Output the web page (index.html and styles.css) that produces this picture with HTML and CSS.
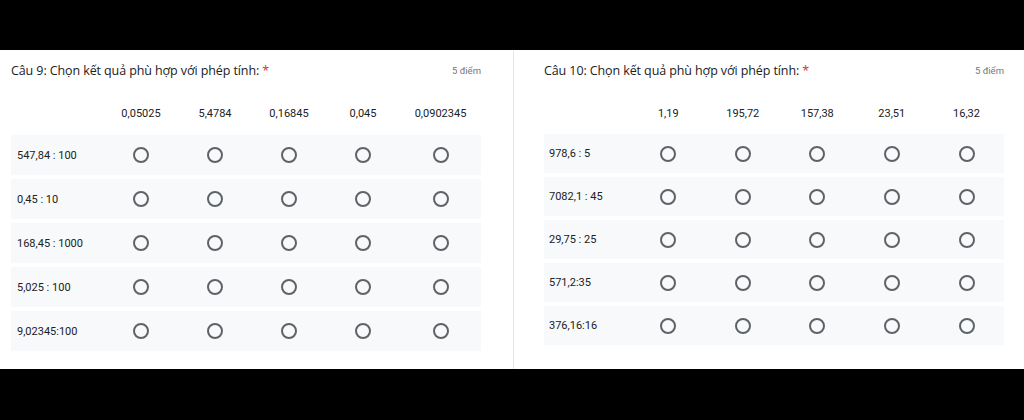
FILE: index.html
```html
<!DOCTYPE html>
<html lang="vi">
<head>
<meta charset="utf-8">
<link rel="stylesheet" href="styles.css">
</head>
<body>
<div class="bar"></div>
<main class="sheet">
  <section class="card card-left">
    <div class="head">
      <h2 class="title">Câu 9: Chọn kết quả phù hợp với phép tính: <span class="req">*</span></h2>
      <span class="points">5 điểm</span>
    </div>
    <div class="grid">
      <div class="cols"><span></span><span>0,05025</span><span>5,4784</span><span>0,16845</span><span>0,045</span><span>0,0902345</span></div>
      <div class="row"><span class="lbl">547,84 : 100</span><i class="radio"></i><i class="radio"></i><i class="radio"></i><i class="radio"></i><i class="radio"></i></div>
      <div class="row"><span class="lbl">0,45 : 10</span><i class="radio"></i><i class="radio"></i><i class="radio"></i><i class="radio"></i><i class="radio"></i></div>
      <div class="row"><span class="lbl">168,45 : 1000</span><i class="radio"></i><i class="radio"></i><i class="radio"></i><i class="radio"></i><i class="radio"></i></div>
      <div class="row"><span class="lbl">5,025 : 100</span><i class="radio"></i><i class="radio"></i><i class="radio"></i><i class="radio"></i><i class="radio"></i></div>
      <div class="row"><span class="lbl">9,02345:100</span><i class="radio"></i><i class="radio"></i><i class="radio"></i><i class="radio"></i><i class="radio"></i></div>
    </div>
  </section>
  <div class="divider"></div>
  <section class="card card-right">
    <div class="head">
      <h2 class="title">Câu 10: Chọn kết quả phù hợp với phép tính: <span class="req">*</span></h2>
      <span class="points">5 điểm</span>
    </div>
    <div class="grid">
      <div class="cols"><span></span><span>1,19</span><span>195,72</span><span>157,38</span><span>23,51</span><span>16,32</span></div>
      <div class="row"><span class="lbl">978,6 : 5</span><i class="radio"></i><i class="radio"></i><i class="radio"></i><i class="radio"></i><i class="radio"></i></div>
      <div class="row"><span class="lbl">7082,1 : 45</span><i class="radio"></i><i class="radio"></i><i class="radio"></i><i class="radio"></i><i class="radio"></i></div>
      <div class="row"><span class="lbl">29,75 : 25</span><i class="radio"></i><i class="radio"></i><i class="radio"></i><i class="radio"></i><i class="radio"></i></div>
      <div class="row"><span class="lbl">571,2:35</span><i class="radio"></i><i class="radio"></i><i class="radio"></i><i class="radio"></i><i class="radio"></i></div>
      <div class="row"><span class="lbl">376,16:16</span><i class="radio"></i><i class="radio"></i><i class="radio"></i><i class="radio"></i><i class="radio"></i></div>
    </div>
  </section>
</main>
<div class="bar bar-bottom"></div>
</body>
</html>
```
FILE: styles.css
```css
html, body {
  margin: 0;
  padding: 0;
  background: #000;
  width: 1024px;
  height: 420px;
  overflow: hidden;
  font-family: Roboto, "Noto Sans", Arial, sans-serif;
}
.bar {
  height: 50px;
  background: #000;
}
.bar-bottom {
  height: 51px;
}
.sheet {
  height: 319px;
  background: #fff;
  display: flex;
}
.card {
  box-sizing: border-box;
  padding-top: 10px;
}
.card-left {
  width: 513px;
  padding-left: 11px;
  padding-right: 32px;
}
.card-right {
  width: 510px;
  padding-left: 30px;
  padding-right: 20px;
}
.divider {
  width: 1px;
  background: #e6e6e6;
}
.head {
  display: flex;
  justify-content: space-between;
  align-items: center;
  height: 20px;
}
.title {
  margin: 0;
  font-family: "Open Sans", Roboto, sans-serif;
  font-weight: 400;
  font-size: 12.5px;
  color: #202124;
  letter-spacing: -0.1px;
}
.req {
  color: #d93025;
}
.points {
  font-size: 9.5px;
  color: #70757a;
}
.grid {
  margin-top: 18px;
  display: flex;
  flex-direction: column;
  gap: 4px;
}
.card-left .cols, .card-left .row {
  grid-template-columns: 93px repeat(4, 74px) 1fr;
}
.card-right .cols, .card-right .row {
  grid-template-columns: 87px repeat(4, 74.5px) 1fr;
}
.cols {
  display: grid;
  height: 30px;
  align-items: center;
  font-size: 11px;
  color: #202124;
  text-align: center;
  margin-bottom: 3px;
}
.card-right .cols {
  margin-bottom: 2px;
}
.row {
  display: grid;
  align-items: center;
  justify-items: center;
  height: 40px;
  background: #f8f9fa;
}
.card-right .row {
  height: 39px;
}
.lbl {
  justify-self: start;
  padding-left: 6px;
  font-size: 11px;
  color: #202124;
}
.card-right .lbl {
  padding-left: 5px;
}
.radio {
  display: block;
  box-sizing: border-box;
  width: 16px;
  height: 16px;
  border: 2px solid #5f6368;
  border-radius: 50%;
}
```
